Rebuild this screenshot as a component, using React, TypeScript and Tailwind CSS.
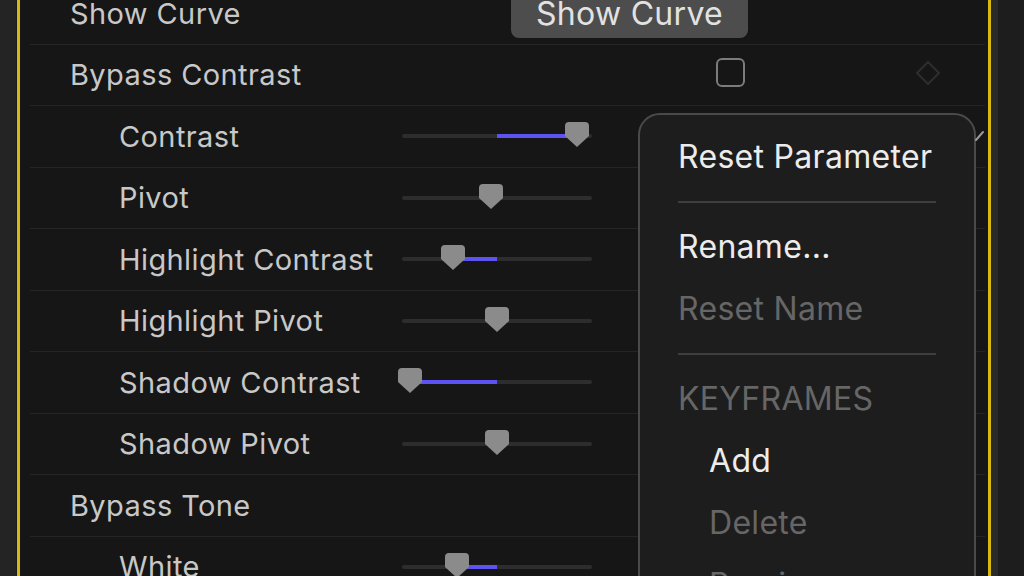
import React from 'react';

interface Row {
    label: string;
    indent?: boolean;
    kind: 'button' | 'check' | 'slider' | 'none';
    value?: number;
}

const rows: Row[] = [
    { label: 'Show Curve', kind: 'button' },
    { label: 'Bypass Contrast', kind: 'check' },
    { label: 'Contrast', indent: true, kind: 'slider', value: 92 },
    { label: 'Pivot', indent: true, kind: 'slider', value: 47 },
    { label: 'Highlight Contrast', indent: true, kind: 'slider', value: 27 },
    { label: 'Highlight Pivot', indent: true, kind: 'slider', value: 50 },
    { label: 'Shadow Contrast', indent: true, kind: 'slider', value: 4 },
    { label: 'Shadow Pivot', indent: true, kind: 'slider', value: 50 },
    { label: 'Bypass Tone', kind: 'none' },
    { label: 'White', indent: true, kind: 'slider', value: 29 },
];

const Thumb = () => (
    <svg width="24" height="25" viewBox="0 0 24 25">
        <path d="M4 0H20Q24 0 24 4V14L12 25L0 14V4Q0 0 4 0Z" fill="#8b8b8b" />
    </svg>
);

// slider track is 190px wide, fill runs from the middle to the thumb
const Slider = ({ value }: { value: number }) => {
    const left = Math.min(value, 50);
    const width = Math.abs(value - 50);
    return (
        <div className="relative w-[190px] h-[4px] rounded-full bg-[#2d2d2d]">
            {width > 0 && (
                <div
                    className="absolute top-0 h-[4px] bg-[#5d52f2]"
                    style={{ left: `${left}%`, width: `${width}%` }}
                />
            )}
            <div
                className="absolute top-[-12px] -translate-x-1/2 flex"
                style={{ left: `${value}%` }}
            >
                <Thumb />
            </div>
        </div>
    );
};

const MenuItem = ({ label, sub, disabled, heading }: { label: string; sub?: boolean; disabled?: boolean; heading?: boolean }) => (
    <div
        className={`h-[62px] flex items-center text-[32px] tracking-[0.3px] ${sub ? 'pl-[69px]' : 'pl-[38px]'} ${
            disabled || heading ? 'text-[#666666]' : 'text-[#ececec]'
        }`}
    >
        {label}
    </div>
);

const Separator = () => (
    <div className="h-[28px] flex items-center px-[38px]">
        <div className="w-full h-[2px] bg-[#3e3e3e]" />
    </div>
);

export default function App() {
    return (
        <div
            className="relative w-[1024px] h-[576px] overflow-hidden flex bg-[#232323]"
            style={{ fontFamily: 'Inter, "Open Sans", sans-serif' }}
        >
            <div className="w-[17px] bg-[#242424] border-r border-[#1c1c1c]" />
            <div className="w-[3px] bg-[#d8b70e]" />
            <div className="flex-1 bg-[#161616] pl-[10px] pr-[3px]">
                <div className="-mt-[17px] flex flex-col">
                    {rows.map((row, i) => (
                        <div key={i} className="h-[61.5px] shrink-0 flex items-center border-b border-[#252525]">
                            <div
                                className={`w-[372px] shrink-0 text-[29px] text-[#c8c8c8] tracking-[0.4px] ${
                                    row.indent ? 'pl-[89px]' : 'pl-[40px]'
                                }`}
                            >
                                {row.label}
                            </div>
                            {row.kind === 'button' && (
                                <div className="ml-[109px] mt-[1px] w-[237px] h-[48px] rounded-[8px] bg-[#4d4d4d] flex items-center justify-center text-[32px] tracking-[0.3px] text-[#e2e2e2]">
                                    Show Curve
                                </div>
                            )}
                            {row.kind === 'check' && (
                                <div className="flex items-center">
                                    <div className="ml-[314px] -mt-[5px] w-[29px] h-[29px] rounded-[6px] border-2 border-[#7c7c7c]" />
                                    <svg className="ml-[170px] -mt-[4px]" width="26" height="26" viewBox="0 0 26 26">
                                        <path d="M13 2L24 13L13 24L2 13Z" fill="none" stroke="#2e2e2e" strokeWidth="2" />
                                    </svg>
                                </div>
                            )}
                            {row.kind === 'slider' && <Slider value={row.value ?? 50} />}
                        </div>
                    ))}
                </div>
            </div>
            <div className="w-[3px] bg-[#d8b70e]" />
            <div className="w-[33px] flex">
                <div className="w-[7px] bg-[#2a2a2a]" />
                <div className="flex-1 bg-[#1d1d1d]" />
            </div>

            {/* context menu */}
            <div className="absolute left-[638px] top-[113px] w-[338px] h-[520px] rounded-[22px] bg-[#1d1d1d] border-2 border-[#4a4a4a] pt-[11px]">
                <MenuItem label="Reset Parameter" />
                <Separator />
                <MenuItem label="Rename..." />
                <MenuItem label="Reset Name" disabled />
                <Separator />
                <MenuItem label="KEYFRAMES" heading />
                <MenuItem label="Add" sub />
                <MenuItem label="Delete" sub disabled />
                <MenuItem label="Previous" sub disabled />
            </div>
            <svg className="absolute left-[974px] top-[130px]" width="12" height="12" viewBox="0 0 12 12">
                <path d="M2 10L9 2" stroke="#9a9a9a" strokeWidth="2" strokeLinecap="round" />
            </svg>
        </div>
    );
}
